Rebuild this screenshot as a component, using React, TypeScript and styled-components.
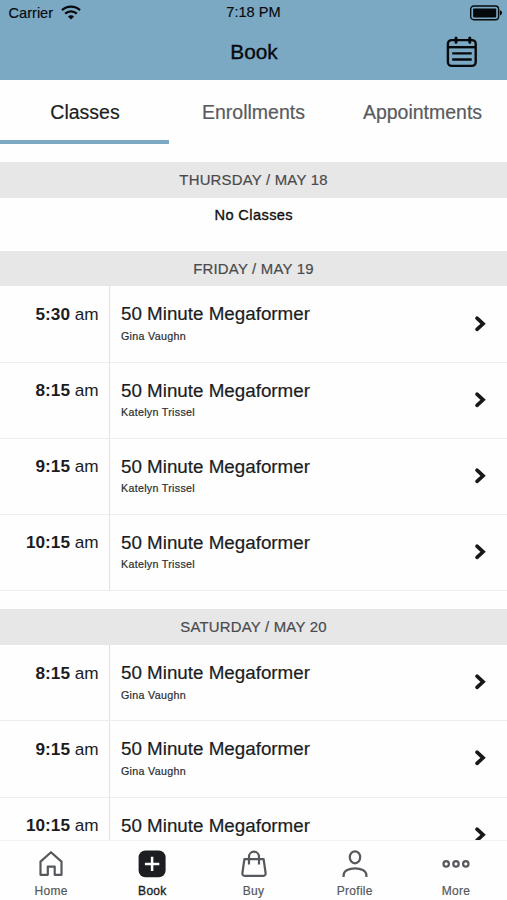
import React from "react";
import styled, { createGlobalStyle } from "styled-components";

const GlobalStyle = createGlobalStyle`
  *, *::before, *::after { box-sizing: border-box; }
  body {
    margin: 0;
    overflow: hidden;
    background: #fefefe;
    font-family: "Liberation Sans", Arial, sans-serif;
    -webkit-font-smoothing: antialiased;
  }
`;

const Screen = styled.div`
  display: flex;
  flex-direction: column;
  width: 507px;
  height: 900px;
  overflow: hidden;
  background: #fefefe;
  color: #1b1c1e;
`;

const Header = styled.header`
  flex: none;
  height: 80px;
  background: #7ba8c3;
  color: #05090c;
`;

const StatusBar = styled.div`
  display: grid;
  grid-template-columns: 1fr auto 1fr;
  align-items: center;
  height: 25px;
  padding: 0 4px 0 8px;
  font-size: 14.6px;
`;

const Carrier = styled.div`
  display: flex;
  align-items: center;
  gap: 8px;
  padding-left: 0.5px;
  -webkit-text-stroke: 0.15px currentColor;
`;

const Clock = styled.span`
  line-height: 17px;
  padding-bottom: 1px;
  margin-right: 4px;
  -webkit-text-stroke: 0.15px currentColor;
`;

const Battery = styled.div`
  display: flex;
  justify-content: flex-end;
`;

const TitleBar = styled.div`
  display: grid;
  grid-template-columns: 1fr auto 1fr;
  align-items: center;
  height: 54px;
  padding-right: 28px;
  padding-left: 28px;
`;

const Title = styled.h1`
  grid-column: 2;
  margin: 0;
  padding-left: 1px;
  font-size: 20.8px;
  font-weight: 400;
  line-height: 24px;
  -webkit-text-stroke: 0.35px currentColor;
`;

const CalendarButton = styled.button`
  justify-self: end;
  display: flex;
  padding: 0;
  border: 0;
  background: none;
  color: inherit;
`;

const Tabs = styled.nav`
  flex: none;
  display: grid;
  grid-template-columns: repeat(3, 1fr);
  height: 64px;
`;

const Tab = styled.button<{ $active?: boolean }>`
  padding: 0 0 1px;
  border: 0;
  border-bottom: 4px solid ${(p) => (p.$active ? "#7ba8c3" : "transparent")};
  border-top: 4px solid transparent;
  background: none;
  color: ${(p) => (p.$active ? "#1d1e20" : "#595b5f")};
  font: 400 19.5px/24px "Liberation Sans", Arial, sans-serif;
  text-indent: ${(p) => (p.$active ? "1px" : "0")};
  -webkit-text-stroke: 0.2px currentColor;
`;

const Schedule = styled.main`
  flex: 1;
  min-height: 0;
  overflow: hidden;
  padding-top: 18px;
`;

const Day = styled.section`
  margin-bottom: 18.4px;
`;

const DayHeading = styled.h2`
  height: 35.8px;
  margin: 0;
  background: #e7e7e7;
  color: #4a4a4c;
  font-size: 14.9px;
  font-weight: 400;
  line-height: 36px;
  letter-spacing: 0.22px;
  text-align: center;
  -webkit-text-stroke: 0.2px currentColor;
`;

const Empty = styled.p`
  height: 34.5px;
  margin: 0;
  padding-left: 0.5px;
  color: #111;
  font-size: 14.6px;
  line-height: 35px;
  letter-spacing: 0.4px;
  text-align: center;
  -webkit-text-stroke: 0.35px currentColor;
`;

const ClassRow = styled.div`
  display: grid;
  grid-template-columns: 110px 1fr 34px;
  height: 76.15px;
  border-bottom: 1px solid #eceeee;
`;

const Time = styled.div`
  padding: 16.4px 10.4px 0 0;
  border-right: 1px solid #dfe2e3;
  font-size: 17.2px;
  line-height: 22px;
  text-align: right;
`;

const Info = styled.div`
  padding: 17px 0 0 11px;
`;

const ClassName = styled.div`
  font-size: 18.8px;
  line-height: 22px;
  -webkit-text-stroke: 0.2px currentColor;
`;

const Teacher = styled.div`
  margin-top: 4.4px;
  font-size: 10.7px;
  line-height: 13px;
  letter-spacing: 0.3px;
  color: #2c2d2f;
  -webkit-text-stroke: 0.2px currentColor;
`;

const Arrow = styled.svg`
  align-self: center;
  margin: 0 0 1px 1px;
`;

const TabBar = styled.footer`
  flex: none;
  display: grid;
  grid-template-columns: repeat(5, 101.2px);
  height: 60px;
  border-top: 1px solid #f3f3f4;
  background: #fefefe;
`;

const NavItem = styled.button<{ $active?: boolean }>`
  display: flex;
  flex-direction: column;
  align-items: center;
  gap: 5px;
  padding: 8px 0 0 1.2px;
  border: 0;
  background: none;
  color: ${(p) => (p.$active ? "#1c1e22" : "#55585c")};
  font: 400 12px/15px "Liberation Sans", Arial, sans-serif;
  letter-spacing: 0.3px;
  -webkit-text-stroke: ${(p) => (p.$active ? "0.35px" : "0.2px")} currentColor;
`;

const NavIcon = styled.svg`
  width: 30px;
  height: 30px;
  fill: none;
  stroke: currentColor;
  stroke-width: 2.2;
`;

type Session = { time: string; teacher: string };

const days: { label: string; sessions: Session[] }[] = [
  { label: "THURSDAY / MAY 18", sessions: [] },
  {
    label: "FRIDAY / MAY 19",
    sessions: [
      { time: "5:30", teacher: "Gina Vaughn" },
      { time: "8:15", teacher: "Katelyn Trissel" },
      { time: "9:15", teacher: "Katelyn Trissel" },
      { time: "10:15", teacher: "Katelyn Trissel" },
    ],
  },
  {
    label: "SATURDAY / MAY 20",
    sessions: [
      { time: "8:15", teacher: "Gina Vaughn" },
      { time: "9:15", teacher: "Gina Vaughn" },
      { time: "10:15", teacher: "" },
    ],
  },
];

const WifiIcon = () => (
  <svg width="20" height="15" viewBox="0 0 20 15" fill="none" stroke="currentColor" strokeWidth="2.3">
    <path d="M1 5.2C6 .4 14 .4 19 5.2" />
    <path d="M4.2 8.6c3.3-3.1 8.3-3.1 11.6 0" />
    <path d="M10 14.6 6.9 11.5c1.7-1.6 4.5-1.6 6.2 0Z" fill="currentColor" stroke="none" />
  </svg>
);

const BatteryIcon = () => (
  <svg width="33" height="16" viewBox="0 0 33 16">
    <rect x="0.7" y="1" width="27.9" height="13.8" rx="3.2" fill="none" stroke="currentColor" strokeWidth="1.4" />
    <rect x="3.1" y="3.4" width="23.1" height="9" rx="0.8" fill="currentColor" />
    <path d="M29.8 5.2c1.7.4 2.2 1.4 2.2 2.6s-.5 2.2-2.2 2.6Z" fill="currentColor" />
  </svg>
);

const CalendarIcon = () => (
  <svg width="34" height="34" viewBox="0 0 34 34" fill="none" stroke="currentColor" strokeWidth="2.4">
    <rect x="2.9" y="5.1" width="27.8" height="25.8" rx="3.8" />
    <path d="M3 12.2h28" />
    <path d="M11 3.1v4.2M24.8 3.1v4.2" strokeWidth="3" strokeLinecap="round" />
    <path d="M7.2 18.4h19.5M7.2 24.5h19.5" />
  </svg>
);

const Chevron = () => (
  <Arrow width="14" height="20" viewBox="0 0 14 20" fill="none" stroke="#17181a" strokeWidth="3.6">
    <path d="m3 4.2 6.1 5.6L3 15.4" strokeLinecap="round" />
  </Arrow>
);

const navItems = [
  {
    label: "Home",
    icon: <path d="M4.5 25.8V12.6L15 3.2l10.5 9.4v13.2h-6.8v-8.2h-6.9v8.2Z" strokeLinejoin="round" />,
  },
  {
    label: "Book",
    icon: (
      <>
        <rect x="1.6" y="1.4" width="27" height="26.8" rx="6.8" fill="currentColor" stroke="none" />
        <path d="M15.1 7.7v14.4M7.9 14.9h14.4" stroke="#fff" strokeWidth="2.5" />
      </>
    ),
  },
  {
    label: "Buy",
    icon: (
      <>
        <path d="M5.4 10.2h19.2l2 13.8q.2 2.8-2.3 2.8H5.7q-2.5 0-2.3-2.8Z" strokeLinejoin="round" />
        <path d="M10 15.5V7.9a5 5.2 0 0 1 10 0v7.6" />
      </>
    ),
  },
  {
    label: "Profile",
    icon: (
      <>
        <ellipse cx="15" cy="8.3" rx="5.2" ry="6" />
        <path d="M3.6 28v-1.8C3.6 17 26.4 17 26.4 26.2V28" />
      </>
    ),
  },
  {
    label: "More",
    icon: (
      <>
        <circle cx="5.2" cy="14.9" r="2.7" />
        <circle cx="15" cy="14.9" r="2.7" />
        <circle cx="24.8" cy="14.9" r="2.7" />
      </>
    ),
  },
];

export default function App() {
  return (
    <Screen>
      <GlobalStyle />
      <Header>
        <StatusBar>
          <Carrier>
            Carrier
            <WifiIcon />
          </Carrier>
          <Clock>7:18 PM</Clock>
          <Battery>
            <BatteryIcon />
          </Battery>
        </StatusBar>
        <TitleBar>
          <Title>Book</Title>
          <CalendarButton aria-label="Calendar">
            <CalendarIcon />
          </CalendarButton>
        </TitleBar>
      </Header>
      <Tabs>
        <Tab $active>Classes</Tab>
        <Tab>Enrollments</Tab>
        <Tab>Appointments</Tab>
      </Tabs>
      <Schedule>
        {days.map((day) => (
          <Day key={day.label}>
            <DayHeading>{day.label}</DayHeading>
            {day.sessions.length === 0 && <Empty>No Classes</Empty>}
            {day.sessions.map((s) => (
              <ClassRow key={s.time}>
                <Time>
                  <b>{s.time}</b> am
                </Time>
                <Info>
                  <ClassName>50 Minute Megaformer</ClassName>
                  {s.teacher && <Teacher>{s.teacher}</Teacher>}
                </Info>
                <Chevron />
              </ClassRow>
            ))}
          </Day>
        ))}
      </Schedule>
      <TabBar>
        {navItems.map((item) => (
          <NavItem key={item.label} $active={item.label === "Book"}>
            <NavIcon viewBox="0 0 30 30">{item.icon}</NavIcon>
            {item.label}
          </NavItem>
        ))}
      </TabBar>
    </Screen>
  );
}
